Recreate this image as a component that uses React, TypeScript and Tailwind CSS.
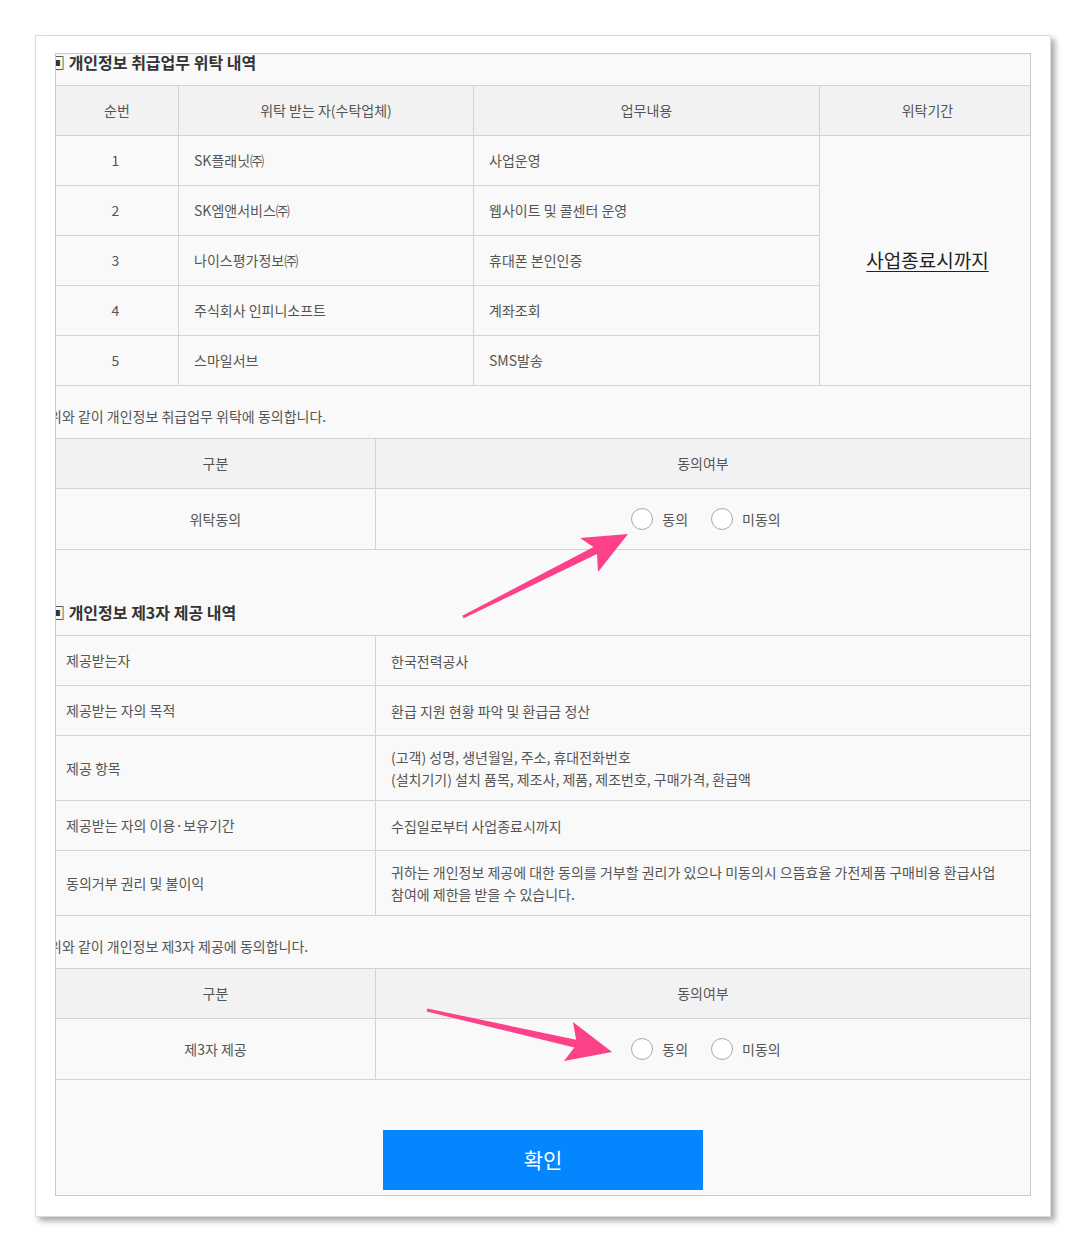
import React from "react";

const font = { fontFamily: '"Noto Sans CJK KR", "Noto Sans", sans-serif' };

function Radio({ label }: { label: string }) {
  return (
    <label className="flex items-center gap-[9px]">
      <span className="block w-[22px] h-[22px] rounded-full border border-[#a9a9a9] bg-white" />
      <span className="text-[14px] text-[#555]">{label}</span>
    </label>
  );
}

function ConsentTable({ label }: { label: string }) {
  return (
    <div className="grid grid-cols-[319px_1fr] grid-rows-[50px_61px] border-t border-[#d3d3d3] text-[14px] text-[#555]">
      <div className="flex items-center justify-center border-b border-[#d3d3d3] bg-[#f2f2f2]">구분</div>
      <div className="flex items-center justify-center border-b border-l border-[#d3d3d3] bg-[#f2f2f2]">동의여부</div>
      <div className="flex items-center justify-center border-b border-[#d3d3d3]">{label}</div>
      <div className="flex items-center justify-center gap-[23px] border-b border-l border-[#d3d3d3] pl-[6px]">
        <Radio label="동의" />
        <Radio label="미동의" />
      </div>
    </div>
  );
}

export default function App() {
  const rows1 = [
    ["1", "SK플래닛㈜", "사업운영"],
    ["2", "SK엠앤서비스㈜", "웹사이트 및 콜센터 운영"],
    ["3", "나이스평가정보㈜", "휴대폰 본인인증"],
    ["4", "주식회사 인피니소프트", "계좌조회"],
    ["5", "스마일서브", "SMS발송"],
  ];
  const rows3: { k: string; v: React.ReactNode; h: string }[] = [
    { k: "제공받는자", v: "한국전력공사", h: "h-[50px]" },
    { k: "제공받는 자의 목적", v: "환급 지원 현황 파악 및 환급금 정산", h: "h-[50px]" },
    {
      k: "제공 항목",
      v: (
        <>
          (고객) 성명, 생년월일, 주소, 휴대전화번호
          <br />
          (설치기기) 설치 품목, 제조사, 제품, 제조번호, 구매가격, 환급액
        </>
      ),
      h: "h-[65px]",
    },
    { k: "제공받는 자의 이용·보유기간", v: "수집일로부터 사업종료시까지", h: "h-[50px]" },
    {
      k: "동의거부 권리 및 불이익",
      v: (
        <>
          귀하는 개인정보 제공에 대한 동의를 거부할 권리가 있으나 미동의시 으뜸효율 가전제품 구매비용 환급사업
          <br />
          참여에 제한을 받을 수 있습니다.
        </>
      ),
      h: "h-[65px]",
    },
  ];

  return (
    <div className="relative w-[1086px] h-[1252px] bg-white" style={font}>
      <div className="absolute left-[35px] top-[35px] w-[1016px] border border-[#dcdcdc] bg-white pt-[17px] pb-[20px] px-[19px] shadow-[4px_4px_6px_rgba(0,0,0,0.35)]">
        <div className="border border-[#c9c9c9] bg-[#f9f9f9] overflow-hidden pb-[5px]">
          {/* heading 1 */}
          <div className="h-[31px] -ml-[7px] text-[16px] font-bold leading-[17px] text-[#333] whitespace-nowrap">
            ▣ 개인정보 취급업무 위탁 내역
          </div>
          {/* table 1 */}
          <div className="grid grid-cols-[122px_295px_346px_1fr] grid-rows-[50px_50px_50px_50px_50px_50px] border-t border-[#d3d3d3] text-[14px] text-[#555]">
            <div className="flex items-center justify-center border-b border-[#d3d3d3] bg-[#f2f2f2]">순번</div>
            <div className="flex items-center justify-center border-b border-l border-[#d3d3d3] bg-[#f2f2f2]">위탁 받는 자(수탁업체)</div>
            <div className="flex items-center justify-center border-b border-l border-[#d3d3d3] bg-[#f2f2f2]">업무내용</div>
            <div className="flex items-center justify-center border-b border-l border-[#d3d3d3] bg-[#f2f2f2] pl-[5px]">위탁기간</div>
            {rows1.map((r, i) => (
              <React.Fragment key={r[0]}>
                <div className="flex items-center justify-center border-b border-[#d3d3d3] pr-[3px]">{r[0]}</div>
                <div className="flex items-center border-b border-l border-[#d3d3d3] pl-[15px]">{r[1]}</div>
                <div className="flex items-center border-b border-l border-[#d3d3d3] pl-[15px]">{r[2]}</div>
                {i === 0 && (
                  <div className="row-span-5 flex items-center justify-center border-b border-l border-[#d3d3d3] pl-[5px]">
                    <span className="text-[19px] text-[#222] underline underline-offset-[3px]">사업종료시까지</span>
                  </div>
                )}
              </React.Fragment>
            ))}
          </div>
          <div className="h-[52px] -ml-[7px] pt-[21px] text-[14px] leading-[18px] text-[#555] whitespace-nowrap">
            위와 같이 개인정보 취급업무 위탁에 동의합니다.
          </div>
          <ConsentTable label="위탁동의" />

          {/* heading 2 */}
          <div className="mt-[54px] h-[31px] -ml-[7px] text-[16px] font-bold leading-[17px] text-[#333] whitespace-nowrap">
            ▣ 개인정보 제3자 제공 내역
          </div>
          <div className="border-t border-[#d3d3d3] text-[14px] text-[#555]">
            {rows3.map((r) => (
              <div key={r.k} className={`grid grid-cols-[319px_1fr] ${r.h}`}>
                <div className="flex items-center border-b border-[#d3d3d3] pl-[10px]">{r.k}</div>
                <div className="flex items-center border-b border-l border-[#d3d3d3] pl-[15px] leading-[22px]">
                  <div>{r.v}</div>
                </div>
              </div>
            ))}
          </div>
          <div className="h-[52px] -ml-[7px] pt-[21px] text-[14px] leading-[18px] text-[#555] whitespace-nowrap">
            위와 같이 개인정보 제3자 제공에 동의합니다.
          </div>
          <ConsentTable label="제3자 제공" />

          <div className="mt-[50px] flex justify-center">
            <button className="w-[320px] h-[60px] bg-[#0486fe] text-white text-[21px]">확인</button>
          </div>
        </div>
      </div>

      <svg className="absolute left-0 top-0 pointer-events-none" width="1086" height="1252" viewBox="0 0 1086 1252">
        <polygon
          fill="#fc4189"
          points="462.3,615.7 593.4,546.9 580,538 628,534 598,572 597,554.1 463.7,618.3"
        />
        <polygon
          fill="#fc4189"
          points="427.3,1008.5 576.1,1039.7 573,1022 612,1052 564,1061 574.3,1047.5 426.7,1011.5"
        />
      </svg>
    </div>
  );
}
